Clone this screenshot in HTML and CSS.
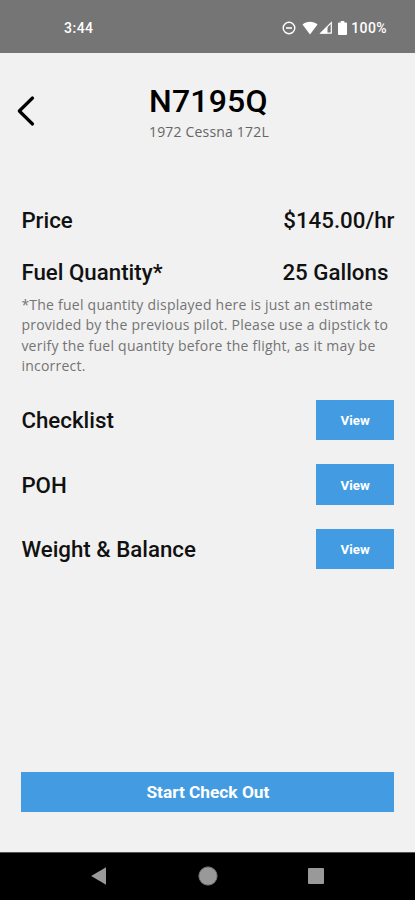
FILE: index.html
```html
<!DOCTYPE html>
<html lang="en">
<head>
    <meta charset="UTF-8">
    <meta name="viewport" content="width=device-width, initial-scale=1.0">
    <title>N7195Q</title>
    <link rel="stylesheet" href="styles.css">
</head>
<body>
    <div class="status-bar">
        <span class="clock">3:44</span>
        <div class="status-icons">
            <svg class="icon-dnd" width="14" height="14" viewBox="0 0 14 14">
                <circle cx="7" cy="7" r="5.8" fill="none" stroke="#fff" stroke-width="1.4"/>
                <path d="M4 7h6" stroke="#fff" stroke-width="1.6"/>
            </svg>
            <svg class="icon-wifi" width="16" height="14" viewBox="0 0 16 14">
                <path d="M0.5 3.6C4.5-0.2 11.5-0.2 15.5 3.6L8 13.5z" fill="#fff"/>
            </svg>
            <svg class="icon-signal" width="14" height="13" viewBox="0 0 14 13">
                <path d="M1.8 12.2L12.3 1.7V12.2z" fill="none" stroke="#fff" stroke-width="1.2"/>
                <path d="M1 12.6L8.5 5V12.6z" fill="#fff"/>
            </svg>
            <svg class="icon-battery" width="9" height="14" viewBox="0 0 9 14">
                <path d="M2.7 0h3.6v1.5H8q1 0 1 1V13q0 1-1 1H1q-1 0-1-1V2.5q0-1 1-1h1.7z" fill="#fff"/>
            </svg>
            <span class="battery-level">100%</span>
        </div>
    </div>

    <div class="screen">
        <header class="header">
            <svg class="back" width="20" height="32" viewBox="0 0 20 32">
                <path d="M16.5 3L3.3 16L16.5 29" fill="none" stroke="#000" stroke-width="3.2" stroke-linecap="round" stroke-linejoin="round"/>
            </svg>
            <div class="title-block">
                <h1 class="title">N7195Q</h1>
                <p class="subtitle">1972 Cessna 172L</p>
            </div>
        </header>

        <div class="row">
            <span class="label">Price</span>
            <span class="label">$145.00/hr</span>
        </div>
        <div class="row">
            <span class="label">Fuel Quantity*</span>
            <span class="label fuel">25 Gallons</span>
        </div>
        <p class="note">*The fuel quantity displayed here is just an estimate<br>provided by the previous pilot. Please use a dipstick to<br>verify the fuel quantity before the flight, as it may be<br>incorrect.</p>

        <div class="documents">
            <div class="document">
                <span class="label">Checklist</span>
                <button class="view-button">View</button>
            </div>
            <div class="document">
                <span class="label">POH</span>
                <button class="view-button">View</button>
            </div>
            <div class="document">
                <span class="label">Weight &amp; Balance</span>
                <button class="view-button">View</button>
            </div>
        </div>

        <button class="checkout-button">Start Check Out</button>
    </div>

    <div class="nav-bar">
        <svg width="18" height="20" viewBox="0 0 18 20">
            <path d="M1.2 10L16 1.2V18.8z" fill="#999"/>
        </svg>
        <svg width="20" height="20" viewBox="0 0 20 20">
            <circle cx="10" cy="10" r="9.1" fill="#999" stroke="#777" stroke-width="1"/>
        </svg>
        <svg width="16" height="16" viewBox="0 0 16 16">
            <rect width="16" height="16" rx="1" fill="#999"/>
        </svg>
    </div>
</body>
</html>
```
FILE: styles.css
```css
* {
    box-sizing: border-box;
}
body {
    margin: 0;
    height: 900px;
    display: flex;
    flex-direction: column;
    font-family: Roboto, sans-serif;
    background: #f1f1f1;
    color: #111;
    overflow: hidden;
}
.status-bar {
    height: 52.5px;
    flex: none;
    display: flex;
    align-items: center;
    justify-content: space-between;
    padding: 3px 28px 0 64px;
    background: #757575;
    color: #fff;
    font-size: 14px;
    font-weight: 500;
}
.clock {
    letter-spacing: 0.5px;
}
.status-icons {
    display: flex;
    align-items: center;
}
.icon-wifi {
    margin-left: 6px;
}
.icon-signal {
    margin-left: 1px;
}
.icon-battery {
    margin-left: 5px;
}
.battery-level {
    margin-left: 4px;
    letter-spacing: 0.4px;
}
.screen {
    flex: 1;
    display: flex;
    flex-direction: column;
    padding: 0 20.6px 40px 21.4px;
}
.header {
    display: flex;
    height: 141px;
    padding-top: 29px;
}
.back {
    margin: 13px 0 0 -5px;
}
.title-block {
    margin-left: 112.6px;
}
.title {
    margin: 0;
    font-size: 32px;
    font-weight: 500;
    line-height: 38px;
    letter-spacing: 0.2px;
    color: #000;
}
.subtitle {
    margin: 2px 0 0;
    font-family: "Open Sans", sans-serif;
    font-size: 14px;
    line-height: 20px;
    letter-spacing: 0.18px;
    color: #666;
}
.row {
    display: flex;
    justify-content: space-between;
    align-items: center;
    height: 52.5px;
}
.label {
    font-size: 22.3px;
    font-weight: 500;
    line-height: 26px;
}
.fuel {
    margin-right: 6px;
}
.note {
    margin: -3.6px 0 0;
    font-family: "Open Sans", sans-serif;
    font-size: 14px;
    line-height: 20.3px;
    letter-spacing: 0.24px;
    color: #747474;
    white-space: nowrap;
}
.documents {
    display: flex;
    flex-direction: column;
    gap: 24px;
    margin-top: 23.9px;
}
.document {
    display: flex;
    justify-content: space-between;
    align-items: center;
}
.view-button,
.checkout-button {
    height: 40.5px;
    padding: 0;
    border: none;
    background: #439ce2;
    color: #fff;
    font-family: Roboto, sans-serif;
    font-weight: 700;
}
.view-button {
    width: 78.5px;
    padding-top: 1px;
    font-size: 13.3px;
}
.checkout-button {
    width: 373px;
    margin-top: auto;
    padding-top: 1px;
    font-size: 17.3px;
}
.nav-bar {
    height: 48px;
    flex: none;
    display: flex;
    align-items: center;
    justify-content: space-between;
    padding: 0 91px 1px 90px;
    border-top: 1px solid #555;
    background: #000;
}
```
